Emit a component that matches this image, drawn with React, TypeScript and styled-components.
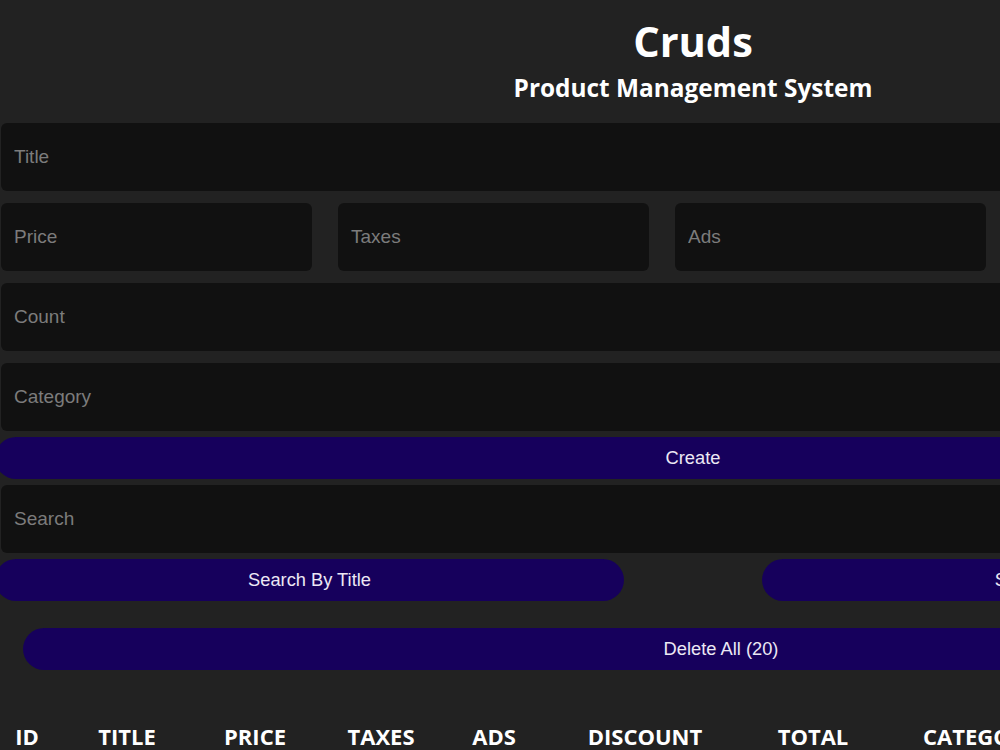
import React from 'react';
import styled, { createGlobalStyle } from 'styled-components';

const GlobalStyle = createGlobalStyle`
  html, body {
    margin: 0;
    padding: 0;
    overflow: hidden;
    background-color: #222;
    color: #fff;
    font-family: "Open Sans", "Noto Sans", sans-serif;
  }
`;

const Crud = styled.div`
  width: 1396px;
  margin-left: -5px;
`;

const Head = styled.div`
  text-align: center;
  padding-top: 17px;
  padding-bottom: 9px;
`;

const StyledH1 = styled.h1`
  margin: 0;
  font-size: 41.6px;
  line-height: 49px;
  font-weight: 700;
`;

const StyledH2 = styled.h2`
  margin: 2px 0 0;
  font-size: 24.4px;
  line-height: 40px;
  font-weight: 700;
`;

const Inputs = styled.div`
  display: flex;
  flex-direction: column;
`;

const Field = styled.input<{ $width?: number }>`
  display: block;
  flex-shrink: 0;
  box-sizing: border-box;
  width: ${(p) => (p.$width ? `${p.$width}px` : '1384px')};
  height: 68px;
  margin: 6px 0 6px 6px;
  padding: 0 13px;
  border: none;
  outline: none;
  border-radius: 6px;
  background-color: #111;
  color: #fff;
  font-family: "Liberation Sans", Arial, sans-serif;
  font-size: 19px;

  &::placeholder {
    color: #7c7c7c;
  }
`;

const PriceRow = styled.div`
  display: flex;
  align-items: center;
  gap: 26px;

  & > ${Field} {
    margin-left: 0;
  }
  & > ${Field}:first-child {
    margin-left: 6px;
  }
`;

const Total = styled.small`
  flex-shrink: 0;
  padding: 6px 10px;
  border-radius: 4px;
  background-color: #a00d02;
  font-family: "Liberation Sans", Arial, sans-serif;
  font-size: 16px;
`;

const Button = styled.button<{ $width?: number }>`
  display: block;
  flex-shrink: 0;
  width: ${(p) => (p.$width ? `${p.$width}px` : '100%')};
  height: 42px;
  padding: 0;
  border: none;
  border-radius: 21px;
  background-color: #16005c;
  color: #ece8f4;
  font-family: "Liberation Sans", Arial, sans-serif;
  font-size: 18.3px;
  cursor: pointer;
`;

const SearchBlock = styled.div`
  display: flex;
  flex-direction: column;
`;

const SearchButtons = styled.div`
  display: flex;
  justify-content: space-between;
`;

const DeleteAll = styled.div`
  width: 1396px;
  margin: 27px 0 27px 28px;
`;

const Table = styled.table`
  width: 1396px;
  table-layout: fixed;
  border-collapse: collapse;
  margin-top: 47px;
`;

const Th = styled.th<{ $width: number }>`
  width: ${(p) => p.$width}px;
  padding: 4px 0;
  text-align: center;
  text-transform: uppercase;
  font-size: 22px;
  line-height: 30px;
  font-weight: 700;
`;

const columns: [string, number][] = [
  ['id', 64],
  ['title', 136],
  ['price', 120],
  ['taxes', 132],
  ['ads', 94],
  ['discount', 208],
  ['total', 128],
  ['category', 208],
  ['update', 153],
  ['delete', 153],
];

export default function App() {
  return (
    <>
      <GlobalStyle />
      <Crud>
        <Head>
          <StyledH1>Cruds</StyledH1>
          <StyledH2>Product Management System</StyledH2>
        </Head>

        <Inputs>
          <Field type="text" placeholder="Title" />
          <PriceRow>
            <Field type="number" placeholder="Price" $width={311} />
            <Field type="number" placeholder="Taxes" $width={311} />
            <Field type="number" placeholder="Ads" $width={311} />
            <Field type="number" placeholder="Discount" $width={311} />
            <Total>Total:</Total>
          </PriceRow>
          <Field type="number" placeholder="Count" />
          <Field type="text" placeholder="Category" />
          <Button>Create</Button>
        </Inputs>

        <SearchBlock>
          <Field type="text" placeholder="Search" />
          <SearchButtons>
            <Button $width={629}>Search By Title</Button>
            <Button $width={629}>Search By Category</Button>
          </SearchButtons>
        </SearchBlock>

        <DeleteAll>
          <Button>Delete All (20)</Button>
        </DeleteAll>

        <Table>
          <thead>
            <tr>
              {columns.map(([name, width]) => (
                <Th key={name} $width={width}>
                  {name}
                </Th>
              ))}
            </tr>
          </thead>
        </Table>
      </Crud>
    </>
  );
}
